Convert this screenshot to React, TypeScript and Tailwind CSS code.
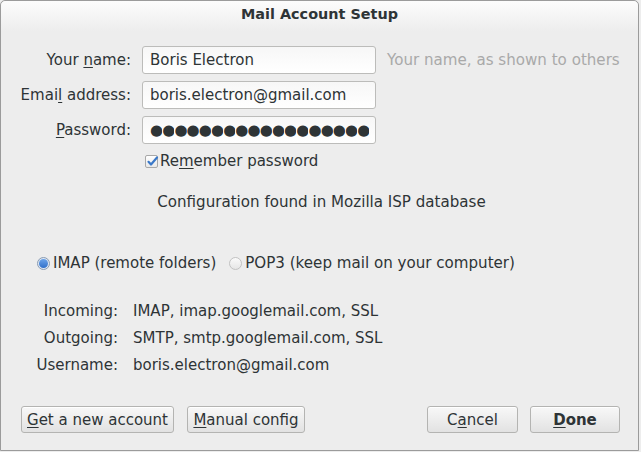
import React from "react";

const font = { fontFamily: '"DejaVu Sans", sans-serif' };

function U({ children }: { children: React.ReactNode }) {
  return <span className="underline underline-offset-[2px] decoration-1">{children}</span>;
}

function Btn({ w, children, bold }: { w: string; children: React.ReactNode; bold?: boolean }) {
  return (
    <div
      className={`${w} h-[27px] flex items-center justify-center rounded-[3px] border border-[#b4b4b2] bg-gradient-to-b from-[#f8f8f8] to-[#e2e2e2] text-[15px] text-[#2e3436] shadow-[inset_0_1px_0_#ffffff] ${bold ? "font-bold" : ""}`}
    >
      {children}
    </div>
  );
}

function Input({ children }: { children: React.ReactNode }) {
  return (
    <div className="w-[234px] h-[28px] rounded-[3px] border border-[#bcbcba] bg-gradient-to-b from-[#f7f7f7] to-[#ffffff] flex items-center pl-[7px] text-[15px] text-[#2e3436] overflow-hidden whitespace-nowrap">
      {children}
    </div>
  );
}

const dots = Array.from({ length: 18 }, (_, i) => i);

export default function App() {
  return (
    <div className="w-[641px] h-[452px] bg-[#ededed]" style={font}>
      <div className="w-[639px] h-[451px] border border-[#9b9b9b] rounded-t-[5px] bg-[#ededed] flex flex-col text-[#2e3436] text-[15px] leading-[20px]">
        <div className="h-[30px] rounded-t-[5px] bg-gradient-to-b from-[#fcfcfc] to-[#ededed] flex justify-center pt-[3px] font-bold text-[14.4px] text-[#2e3436]">
          Mail Account Setup
        </div>

        <div className="flex flex-col mt-[15px]">
          <div className="flex items-center h-[28px]">
            <div className="w-[130px] text-right">Your <U>n</U>ame:</div>
            <div className="ml-[11px]"><Input>Boris Electron</Input></div>
            <div className="ml-[11px] text-[#a9a9a9] text-[15.1px]">Your name, as shown to others</div>
          </div>
          <div className="flex items-center h-[28px] mt-[7px]">
            <div className="w-[130px] text-right">Emai<U>l</U> address:</div>
            <div className="ml-[11px]"><Input>boris.electron@gmail.com</Input></div>
          </div>
          <div className="flex items-center h-[28px] mt-[7px]">
            <div className="w-[130px] text-right"><U>P</U>assword:</div>
            <div className="ml-[11px]">
              <Input>
                <div className="flex">
                  {dots.map((i) => (
                    <span key={i} className="w-[12.2px] text-center text-[15px] leading-[20px] text-[#2e3436] overflow-hidden">●</span>
                  ))}
                </div>
              </Input>
            </div>
          </div>
          <div className="flex items-center h-[20px] mt-[7px] pl-[144px]">
            <div className="relative w-[13px] h-[13px] rounded-[2px] border border-[#a8a8a8] bg-gradient-to-b from-[#ffffff] to-[#e8e8e8]">
              <svg className="absolute left-[0px] top-[-1px]" width="13" height="13" viewBox="0 0 13 13">
                <path d="M2.5 6.8 L5 9.5 L11 2.5" fill="none" stroke="#3a78c8" strokeWidth="2.2" strokeLinecap="round" strokeLinejoin="round" />
              </svg>
            </div>
            <div className="ml-[2px]">Re<U>m</U>ember password</div>
          </div>
          <div className="flex justify-center h-[20px] mt-[21px] pl-[4px] text-[15.1px]">
            Configuration found in Mozilla ISP database
          </div>
          <div className="flex items-center h-[20px] mt-[41px] pl-[36px]">
            <div className="w-[13px] h-[13px] rounded-full border border-[#8a9cb3] bg-[#dde6f2] flex items-center justify-center">
              <div className="w-[9px] h-[9px] rounded-full bg-gradient-to-b from-[#6aa3ea] to-[#2f6fc9]" />
            </div>
            <div className="ml-[3px]">IMAP (remote folders)</div>
            <div className="ml-[13px] w-[13px] h-[13px] rounded-full border border-[#c2c2c2] bg-gradient-to-b from-[#fafafa] to-[#e6e6e6]" />
            <div className="ml-[3px] text-[15.1px]">POP3 (keep mail on your computer)</div>
          </div>

          <div className="flex items-center h-[20px] mt-[28px]">
            <div className="w-[117px] text-right">Incoming:</div>
            <div className="ml-[15px]">IMAP, imap.googlemail.com, SSL</div>
          </div>
          <div className="flex items-center h-[20px] mt-[7px]">
            <div className="w-[117px] text-right">Outgoing:</div>
            <div className="ml-[15px]">SMTP, smtp.googlemail.com, SSL</div>
          </div>
          <div className="flex items-center h-[20px] mt-[7px]">
            <div className="w-[117px] text-right">Username:</div>
            <div className="ml-[15px]">boris.electron@gmail.com</div>
          </div>

          <div className="flex items-center mt-[31px] pl-[20px] pr-[18px]">
            <Btn w="w-[153px]"><U>G</U>et a new account</Btn>
            <div className="ml-[13px]"><Btn w="w-[118px]"><U>M</U>anual config</Btn></div>
            <div className="flex-1" />
            <Btn w="w-[91px]">C<U>a</U>ncel</Btn>
            <div className="ml-[12px]"><Btn w="w-[90px]" bold><U>D</U>one</Btn></div>
          </div>
        </div>
      </div>
    </div>
  );
}
